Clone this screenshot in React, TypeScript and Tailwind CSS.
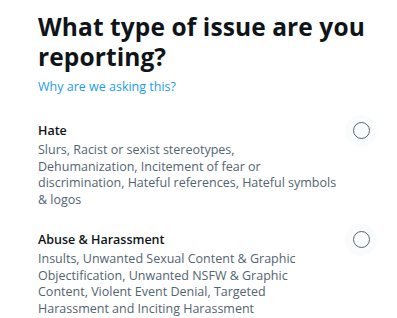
const options = [
  {
    title: "Hate",
    lines: [
      "Slurs, Racist or sexist stereotypes,",
      "Dehumanization, Incitement of fear or",
      "discrimination, Hateful references, Hateful symbols",
      "& logos",
    ],
  },
  {
    title: "Abuse & Harassment",
    lines: [
      "Insults, Unwanted Sexual Content & Graphic",
      "Objectification, Unwanted NSFW & Graphic",
      "Content, Violent Event Denial, Targeted",
      "Harassment and Inciting Harassment",
    ],
  },
]

export default function App() {
  return (
    <div className="w-[397px] h-[318px] overflow-hidden bg-white pl-[38px] pr-[27px] pt-[12px] font-['Open_Sans',sans-serif]">
      <h1 className="text-[24.5px] leading-[30px] font-bold text-[#0f1419] tracking-[0.1px]">
        What type of issue are you reporting?
      </h1>
      <a className="block mt-[6px] text-[12.5px] leading-[17px] text-[#1d9bf0]">Why are we asking this?</a>

      <div className="mt-[27px] flex flex-col gap-[23.3px]">
        {options.map((o) => (
          <div key={o.title} className="flex items-start justify-between">
            <div className="w-[310px]">
              <div className="text-[12.5px] leading-[17px] font-semibold text-[#0f1419]">{o.title}</div>
              <p className="mt-[3px] text-[12.5px] leading-[16.5px] text-[#536471] whitespace-nowrap">
                {o.lines.map((l) => (
                  <span key={l} className="block">{l}</span>
                ))}
              </p>
            </div>
            <div className="w-[32px] h-[32px] -mt-[7.5px] -mr-[7px] flex items-center justify-center rounded-full bg-[#fafbfc]">
              <span className="w-[17px] h-[17px] rounded-full border-[1.5px] border-[#536471]" />
            </div>
          </div>
        ))}
      </div>
    </div>
  )
}
